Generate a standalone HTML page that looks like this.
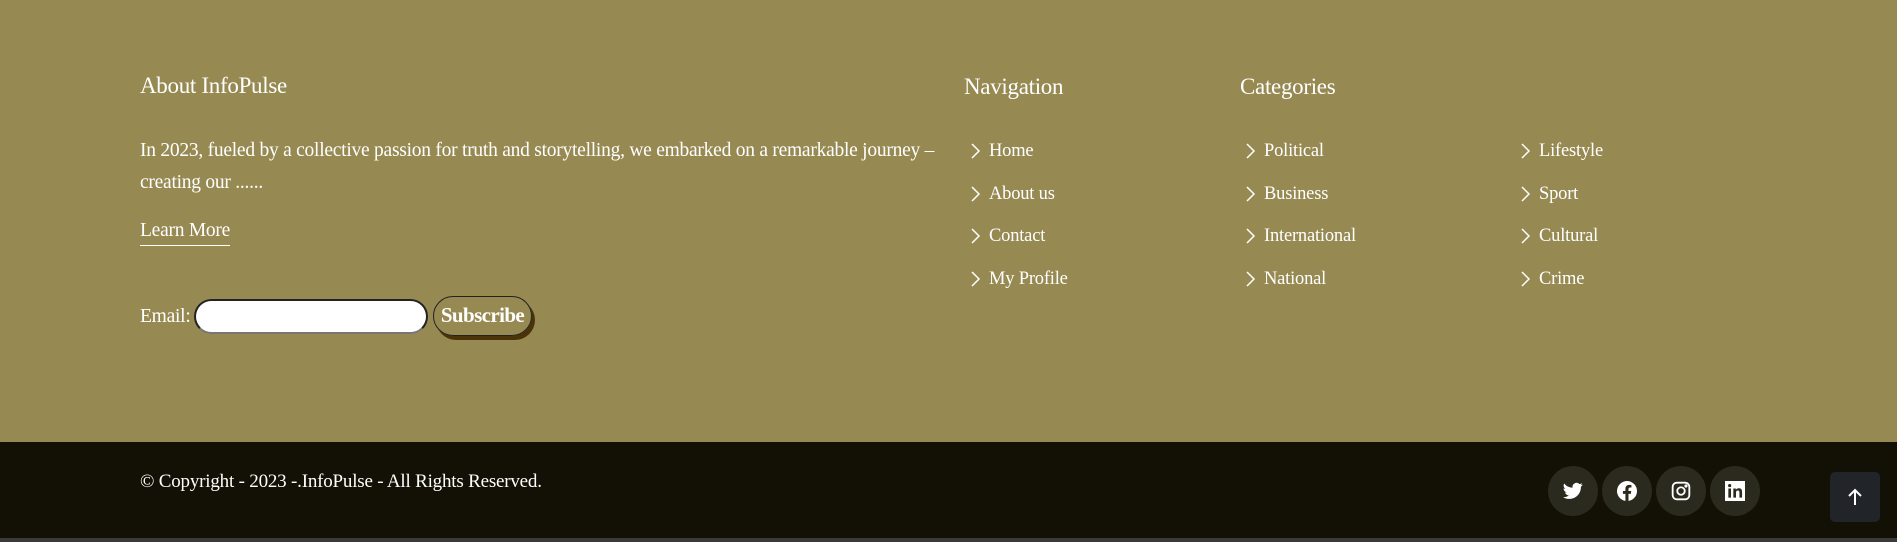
<!DOCTYPE html>
<html><head><meta charset="utf-8"><style>
*{margin:0;padding:0;box-sizing:border-box}
body{width:1897px;height:542px;overflow:hidden;background:#978952;font-family:"Liberation Serif",serif;color:#fff;position:relative}
.a{position:absolute;white-space:nowrap}
h3{position:absolute;font-weight:normal;font-size:23px;letter-spacing:-0.3px;line-height:1}
.p{font-size:19.5px;letter-spacing:-0.25px;line-height:1}
.it{position:absolute;font-size:18.5px;letter-spacing:-0.2px;line-height:1}
.it svg{position:absolute;left:-20px;top:1px}
.bot{position:absolute;left:0;top:442px;width:1897px;height:96px;background:#131105}
.line{position:absolute;left:0;top:538px;width:1897px;height:4px;background:#3a3a38}
.c{position:absolute;top:466px;width:50px;height:50px;border-radius:50%;background:#2b2a1f;display:flex;align-items:center;justify-content:center}
</style></head><body>
<h3 style="left:140px;top:74px">About InfoPulse</h3>
<div class="a p" style="left:140px;top:141px">In 2023, fueled by a collective passion for truth and storytelling, we embarked on a remarkable journey –</div>
<div class="a p" style="left:140px;top:173px">creating our ......</div>
<div class="a p" style="left:140px;top:221px;border-bottom:1.5px solid #fff;padding-bottom:4px">Learn More</div>
<div class="a p" style="left:140px;top:307px">Email:</div>
<div class="a" style="left:194px;top:299px;width:234px;height:35px;border-radius:18px;background:#fff;border:2px solid #222;border-bottom-color:#777"></div>
<div class="a" style="left:433px;top:296px;width:99px;height:40px;border-radius:20px;border:1.5px solid #222;box-shadow:3px 4px 0 #4a3308;font-weight:bold;font-size:21px;letter-spacing:-0.6px;text-align:center;line-height:37px">Subscribe</div>

<h3 style="left:964px;top:75px">Navigation</h3>
<h3 style="left:1240px;top:75px">Categories</h3>
<div class="it" style="left:989px;top:142px"><svg width="12" height="16" viewBox="0 0 12 16"><path d="M3 1l7 7-7 7" stroke="#fff" stroke-width="1.5" fill="none"/></svg>Home</div>
<div class="it" style="left:989px;top:185px"><svg width="12" height="16" viewBox="0 0 12 16"><path d="M3 1l7 7-7 7" stroke="#fff" stroke-width="1.5" fill="none"/></svg>About us</div>
<div class="it" style="left:989px;top:227px"><svg width="12" height="16" viewBox="0 0 12 16"><path d="M3 1l7 7-7 7" stroke="#fff" stroke-width="1.5" fill="none"/></svg>Contact</div>
<div class="it" style="left:989px;top:270px"><svg width="12" height="16" viewBox="0 0 12 16"><path d="M3 1l7 7-7 7" stroke="#fff" stroke-width="1.5" fill="none"/></svg>My Profile</div>
<div class="it" style="left:1264px;top:142px"><svg width="12" height="16" viewBox="0 0 12 16"><path d="M3 1l7 7-7 7" stroke="#fff" stroke-width="1.5" fill="none"/></svg>Political</div>
<div class="it" style="left:1264px;top:185px"><svg width="12" height="16" viewBox="0 0 12 16"><path d="M3 1l7 7-7 7" stroke="#fff" stroke-width="1.5" fill="none"/></svg>Business</div>
<div class="it" style="left:1264px;top:227px"><svg width="12" height="16" viewBox="0 0 12 16"><path d="M3 1l7 7-7 7" stroke="#fff" stroke-width="1.5" fill="none"/></svg>International</div>
<div class="it" style="left:1264px;top:270px"><svg width="12" height="16" viewBox="0 0 12 16"><path d="M3 1l7 7-7 7" stroke="#fff" stroke-width="1.5" fill="none"/></svg>National</div>
<div class="it" style="left:1539px;top:142px"><svg width="12" height="16" viewBox="0 0 12 16"><path d="M3 1l7 7-7 7" stroke="#fff" stroke-width="1.5" fill="none"/></svg>Lifestyle</div>
<div class="it" style="left:1539px;top:185px"><svg width="12" height="16" viewBox="0 0 12 16"><path d="M3 1l7 7-7 7" stroke="#fff" stroke-width="1.5" fill="none"/></svg>Sport</div>
<div class="it" style="left:1539px;top:227px"><svg width="12" height="16" viewBox="0 0 12 16"><path d="M3 1l7 7-7 7" stroke="#fff" stroke-width="1.5" fill="none"/></svg>Cultural</div>
<div class="it" style="left:1539px;top:270px"><svg width="12" height="16" viewBox="0 0 12 16"><path d="M3 1l7 7-7 7" stroke="#fff" stroke-width="1.5" fill="none"/></svg>Crime</div>

<div class="bot"></div>
<div class="line"></div>
<div class="a" style="left:140px;top:472px;font-size:19px;letter-spacing:-0.2px;line-height:1">© Copyright - 2023 -.InfoPulse - All Rights Reserved.</div>

<div class="c" style="left:1548px"><svg width="20" height="18" viewBox="0 0 24 20"><path fill="#fff" d="M23.6 2.4c-.9.4-1.8.6-2.8.8 1-.6 1.8-1.6 2.1-2.7-.9.6-2 1-3.1 1.2A4.9 4.9 0 0 0 11.5 6.1 13.9 13.9 0 0 1 1.4 1 4.9 4.9 0 0 0 2.9 7.5c-.8 0-1.6-.2-2.200-.6 0 2.4 1.7 4.4 3.9 4.8-.7.2-1.5.2-2.200.1.6 2 2.4 3.4 4.6 3.4A9.9 9.9 0 0 1 0 17.3 13.9 13.9 0 0 0 7.5 19.5c9 0 14-7.5 14-14v-.6c1-.7 1.8-1.6 2.100-2.500z"/></svg></div>
<div class="c" style="left:1602px"><svg width="20" height="20" viewBox="0 0 24 24"><path fill="#fff" d="M24 12a12 12 0 1 0-13.9 11.9v-8.4H7.1V12h3V9.4c0-3 1.8-4.7 4.5-4.7 1.3 0 2.7.2 2.7.2v2.9h-1.5c-1.5 0-2 .9-2 1.9V12h3.3l-.5 3.5h-2.8v8.4A12 12 0 0 0 24 12z"/></svg></div>
<div class="c" style="left:1656px"><svg width="20" height="20" viewBox="0 0 24 24" fill="none" stroke="#fff" stroke-width="2.2"><rect x="2" y="2" width="20" height="20" rx="5"/><circle cx="12" cy="12" r="4.5"/><circle cx="18" cy="6" r=".8" fill="#fff"/></svg></div>
<div class="c" style="left:1710px"><svg width="20" height="20" viewBox="0 0 24 24"><rect width="24" height="24" fill="#fff"/><rect x="4" y="9" width="3.2" height="11" fill="#2b2a1f"/><circle cx="5.6" cy="5.5" r="1.9" fill="#2b2a1f"/><path fill="#2b2a1f" d="M10 9h3v1.6c.5-1 1.8-1.9 3.6-1.9 3.3 0 3.9 2.1 3.9 4.9V20h-3.2v-5.6c0-1.4-.1-3-1.9-3s-2.2 1.4-2.2 2.9V20H10z"/></svg></div>
<div class="a" style="left:1830px;top:472px;width:50px;height:50px;border-radius:5px;background:#212529;display:flex;align-items:center;justify-content:center"><svg width="16" height="18" viewBox="0 0 16 18" fill="none" stroke="#fff" stroke-width="2"><path d="M8 17V2M2 8l6-6 6 6"/></svg></div>
</body></html>
